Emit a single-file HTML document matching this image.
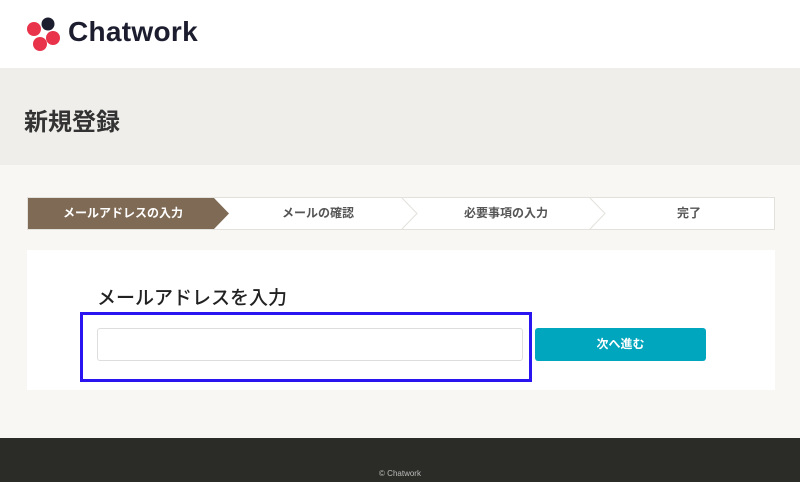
<!DOCTYPE html>
<html><head><meta charset="utf-8"><style>
*{margin:0;padding:0;box-sizing:border-box}
body{width:800px;height:482px;overflow:hidden;background:#f8f7f4;font-family:"Liberation Sans","Noto Sans CJK JP",sans-serif;position:relative}
.hdr{position:absolute;left:0;top:0;width:800px;height:68px;background:#fff}
.logo{position:absolute;left:68px;top:16px;font-size:28px;font-weight:bold;color:#1c1d2e;letter-spacing:0.3px}
.band{position:absolute;left:0;top:68px;width:800px;height:97px;background:#efeeea}
.band h1{position:absolute;left:24px;top:34px;font-size:24px;font-weight:bold;color:#333}
.steps{position:absolute;left:27px;top:197px;width:748px;height:33px;background:#fff;border:1px solid #e3e1dc}
.steps div{position:absolute;top:0;height:31px;line-height:31px;font-size:12px;font-weight:bold;color:#555;text-align:center}
.card{position:absolute;left:27px;top:250px;width:748px;height:140px;background:#fff}
.card h2{position:absolute;left:70px;top:33px;font-size:19px;font-weight:500;color:#222}
.inp{position:absolute;left:97px;top:328px;width:426px;height:33px;border:1px solid #ddd;border-radius:3px;background:#fff}
.btn{position:absolute;left:535px;top:328px;width:171px;height:33px;background:#00a6bd;border-radius:3px;color:#fff;font-size:12px;font-weight:bold;text-align:center;line-height:33px}
.hl{position:absolute;left:80px;top:312px;width:452px;height:70px;border:3px solid #2a14f0}
.ftr{position:absolute;left:0;top:438px;width:800px;height:44px;background:#2b2c27;color:#bbb;font-size:8px;text-align:center;padding-top:31px}
</style></head><body>
<div class="hdr">
<svg style="position:absolute;left:25px;top:16px" width="40" height="36" viewBox="0 0 40 36">
<circle cx="23" cy="8" r="6.5" fill="#1c1d2e"/>
<circle cx="9" cy="13" r="7" fill="#e8334a"/>
<circle cx="28" cy="22" r="7" fill="#e8334a"/>
<circle cx="15" cy="28" r="7" fill="#e8334a"/>
</svg>
<div class="logo">Chatwork</div>
</div>
<div class="band"><h1>新規登録</h1></div>
<div class="steps">
<svg style="position:absolute;left:0;top:0" width="746" height="31">
<polygon points="0,0 186,0 201,15.5 186,31 0,31" fill="#7f6a55"/>
<polyline points="374,0 389,15.5 374,31" fill="none" stroke="#e3e1dc"/>
<polyline points="562,0 577,15.5 562,31" fill="none" stroke="#e3e1dc"/>
</svg>
<div style="left:0;width:190px;color:#fff">メールアドレスの入力</div>
<div style="left:200px;width:180px">メールの確認</div>
<div style="left:388px;width:180px">必要事項の入力</div>
<div style="left:576px;width:170px">完了</div>
</div>
<div class="card"><h2>メールアドレスを入力</h2></div>
<div class="inp"></div>
<div class="btn">次へ進む</div>
<div class="hl"></div>
<div class="ftr">© Chatwork</div>
</body></html>
